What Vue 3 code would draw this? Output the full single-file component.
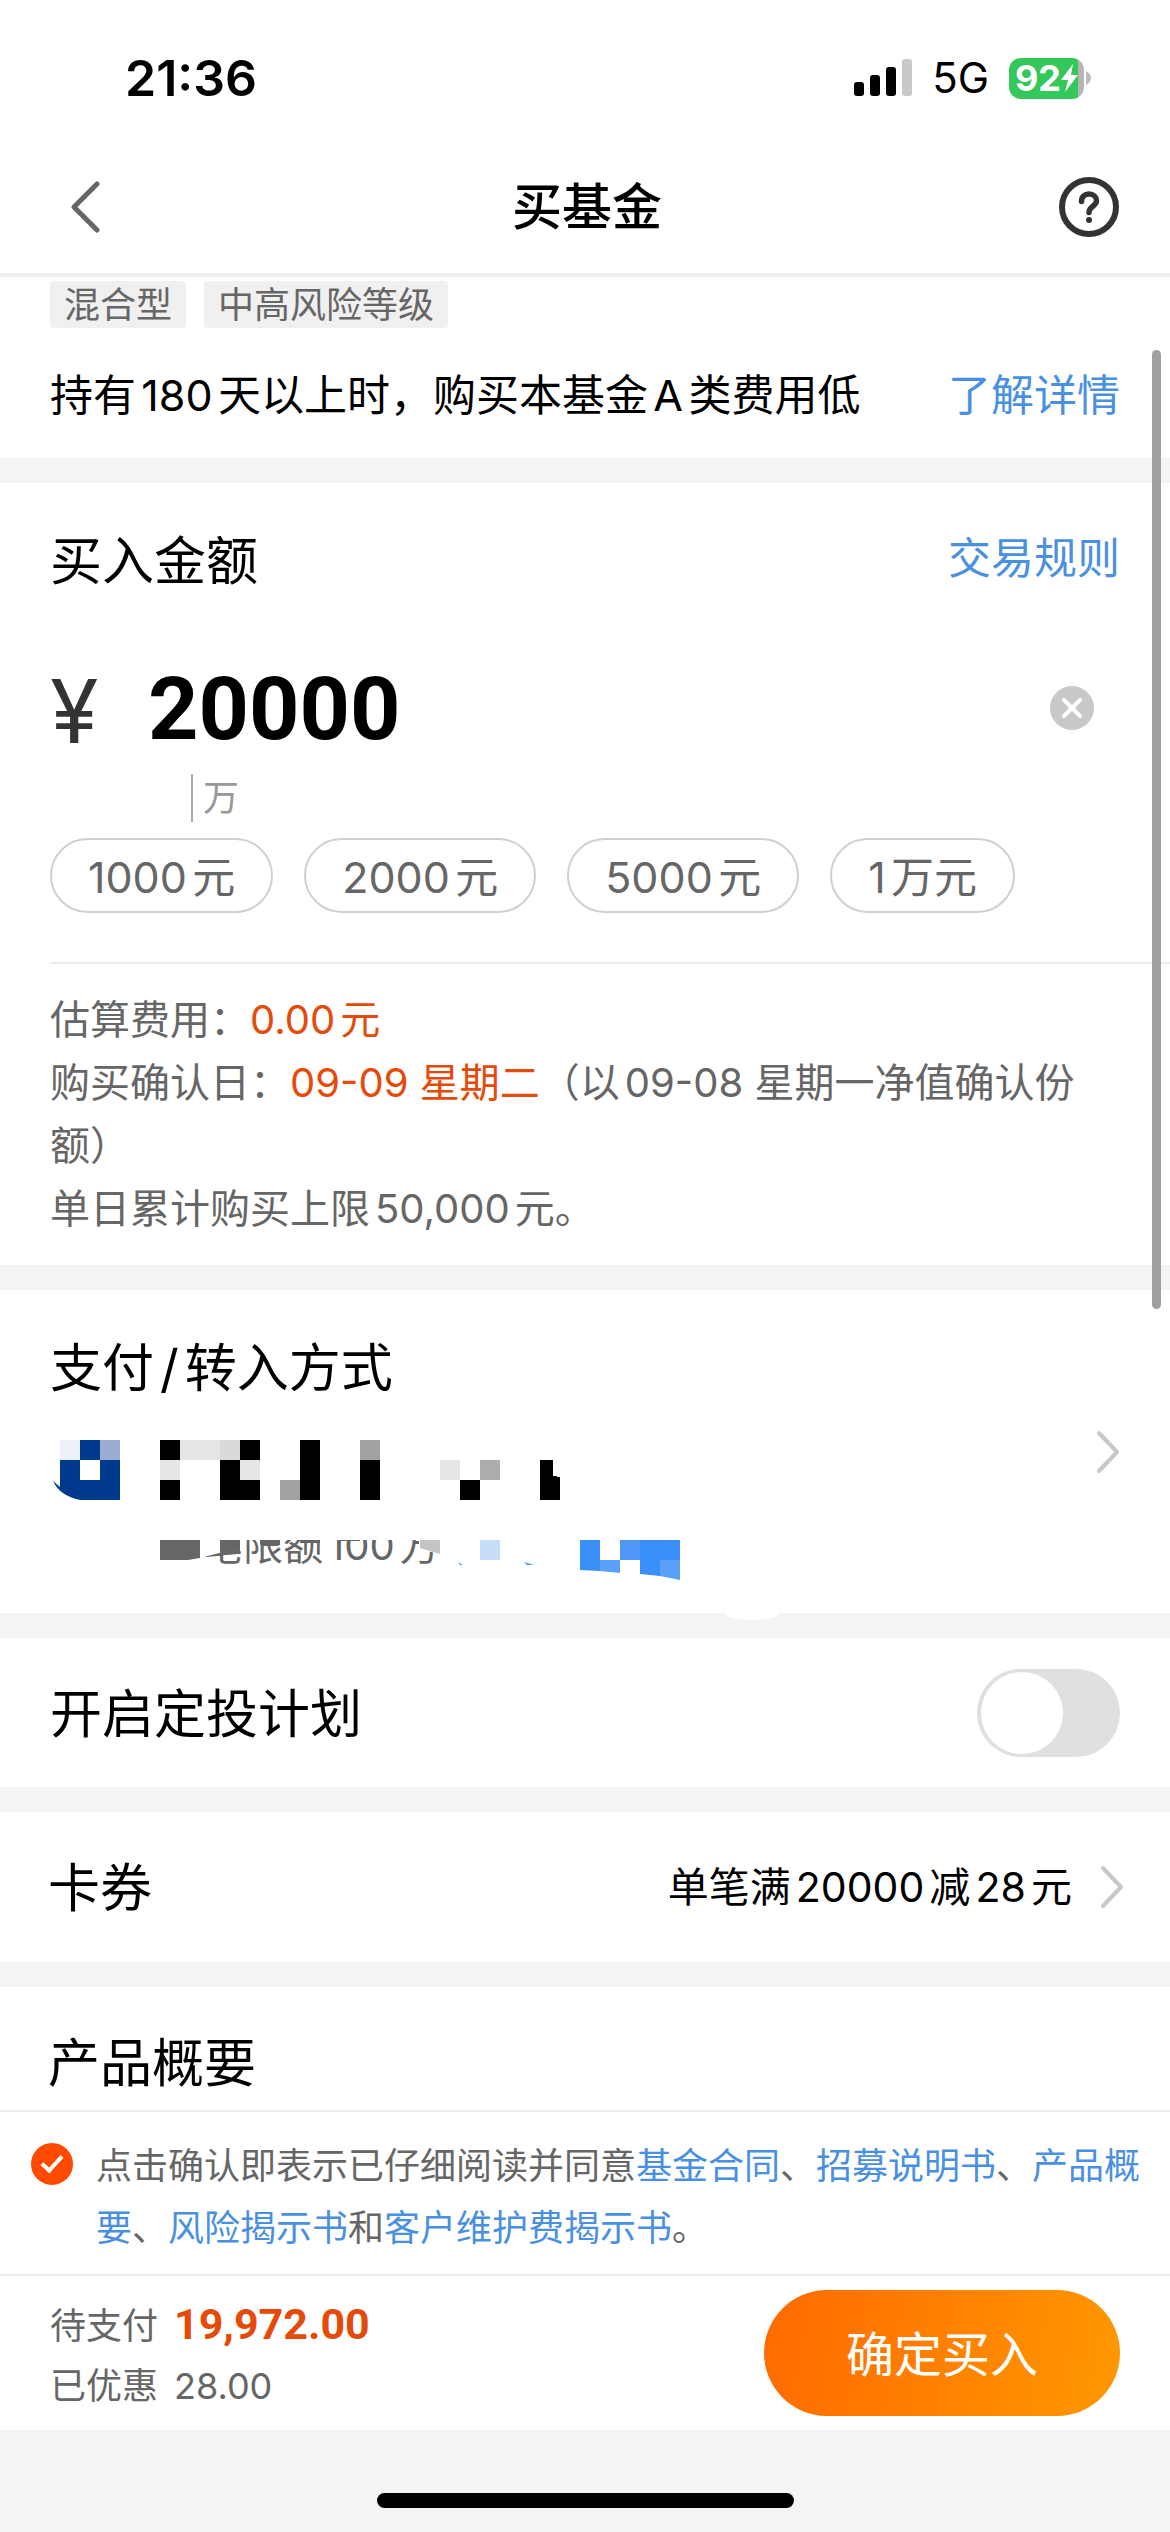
<script setup>
import { ref } from 'vue'

const amount = ref('20000')
const plan = ref(false)
const agreed = ref(true)
const presets = ['1000元', '2000元', '5000元', '1万元']
</script>

<template>
  <div class="page">
    <header class="status">
      <span class="clock">21:36</span>
      <div class="status-right">
        <svg class="signal" width="58" height="38" viewBox="0 0 58 38" aria-hidden="true">
          <rect x="0" y="23" width="10" height="14" rx="3" fill="#000" />
          <rect x="16" y="16" width="10" height="21" rx="3" fill="#000" />
          <rect x="32" y="8" width="10" height="29" rx="3" fill="#000" />
          <rect x="48" y="0" width="10" height="37" rx="3" fill="#c9c9c9" />
        </svg>
        <span class="network">5G</span>
        <span class="battery">
          <span class="battery-body">
            <span class="level">92</span>
            <svg width="17" height="28" viewBox="0 0 17 28" aria-hidden="true">
              <path d="M12 0 L0 16 H7 L4 28 L17 11 H10 Z" fill="#fff" />
            </svg>
          </span>
          <svg width="5" height="14" viewBox="0 0 5 14" aria-hidden="true">
            <path d="M0 0 Q5 3 5 7 Q5 11 0 14 Z" fill="#bdbdbd" />
          </svg>
        </span>
      </div>
    </header>

    <nav class="nav">
      <button class="icon-button back" type="button" aria-label="返回">
        <svg width="30" height="54" viewBox="0 0 30 54">
          <path d="M27 4 L4 27 L27 50" fill="none" stroke="#666" stroke-width="5" stroke-linecap="round" stroke-linejoin="round" />
        </svg>
      </button>
      <h1>买基金</h1>
      <button class="icon-button" type="button" aria-label="帮助">
        <svg width="60" height="60" viewBox="0 0 60 60">
          <circle cx="30" cy="30" r="27" fill="none" stroke="#333" stroke-width="6" />
          <path d="M22.500 24.500 C22.500 19.500 25.500 17 30 17 C34.500 17 37.500 20 37.500 23.500 C37.500 29.500 30 29 30 35.500" fill="none" stroke="#333" stroke-width="5.500" stroke-linecap="round" />
          <circle cx="30" cy="43" r="3" fill="#333" />
        </svg>
      </button>
    </nav>

    <main>
      <section class="intro">
        <div class="tags">
          <span>混合型</span>
          <span>中高风险等级</span>
        </div>
        <div class="row fee-tip">
          <p>持有180天以上时，购买本基金A类费用低</p>
          <a href="#detail">了解详情</a>
        </div>
      </section>

      <section class="buy">
        <div class="row">
          <h2><label for="amount">买入金额</label></h2>
          <a href="#rules">交易规则</a>
        </div>
        <div class="amount">
          <span class="currency">¥</span>
          <input id="amount" v-model="amount" type="text" inputmode="decimal" />
          <button class="icon-button" type="button" aria-label="清除" @click="amount = ''">
            <svg width="44" height="44" viewBox="0 0 44 44">
              <circle cx="22" cy="22" r="22" fill="#c8c8c8" />
              <path d="M14 14 L30 30 M30 14 L14 30" stroke="#fff" stroke-width="4" stroke-linecap="round" />
            </svg>
          </button>
        </div>
        <div class="unit"><span>万</span></div>
        <div class="presets">
          <button v-for="p in presets" :key="p" type="button">{{ p }}</button>
        </div>
        <div class="info">
          <p>估算费用：<em>0.00元</em></p>
          <p>购买确认日：<em>09-09 星期二</em>（以09-08 星期一净值确认份额）</p>
          <p>单日累计购买上限50,000元。</p>
        </div>
      </section>

      <section class="pay">
        <h2>支付<span class="slash">/</span>转入方式</h2>
        <div class="account">
          <div class="account-text">
            <svg class="masked-name" width="510" height="60" viewBox="0 0 510 60" shape-rendering="crispEdges" aria-hidden="true">
              <path d="M30 0 H50 V20 H70 V60 H30 Q10 56 3 41 L10 47 V20 H30 Z" fill="#003a8c" shape-rendering="auto" />
              <rect x="10" y="0" width="20" height="20" fill="#edf1fa" />
              <rect x="50" y="0" width="20" height="20" fill="#98add1" />
              <rect x="30" y="20" width="20" height="20" fill="#fff" />
              <path d="M110 0h20v20h-20z M190 0h20v20h-20z M170 20h20v20h20v20h-40z M110 40h20v20h-20z M250 0h20v60h-20z M310 20h20v40h-20z M410 40h20v20h-20z M490 20h13v16l7 1v23h-20z" fill="#000" />
              <path d="M130 0h40v20h-40z M110 20h20v20h-20z M190 20h20v20h-20z M390 20h20v20h-20z" fill="#e5e5e7" />
              <rect x="170" y="0" width="20" height="20" fill="#dadadb" />
              <path d="M230 40h20v20h-20z M310 0h20v20h-20z" fill="#a1a1a1" />
              <rect x="430" y="20" width="20" height="20" fill="#adadad" />
            </svg>
            <div class="limit">
              <span>单笔限额100万</span>
              <svg class="mask" width="520" height="40" viewBox="0 0 520 40" aria-hidden="true">
                <path d="M0 0h86v6L40 18L54 21V28H0z" fill="#fff" />
                <path d="M0 0h40v18L28 20H0z M60 0h20v11L60 15z M100 0h20v5h-20z M140 0h20v3h-20z M180 0h20v1h-20z" fill="#666" />
                <path d="M259 0h25v15l-25-6z" fill="#fff" />
                <path d="M260 0h20v14l-20-6z" fill="#c4c4c4" />
                <rect x="320" y="0" width="20" height="20" fill="#c6def9" />
                <path d="M298 22l5 3h-3z M364 22l10 3h-7z" fill="#5a9bd0" />
                <path d="M420 0h20v31l-20-1z M480 0h40v20h-20v16l-20-2z" fill="#3a8ff8" />
                <path d="M440 20h20v13l-20-2z M500 20h20v20l-20-4z" fill="#5a9ff8" />
                <rect x="460" y="0" width="20" height="20" fill="#5096f6" />
              </svg>
            </div>
          </div>
          <svg class="chevron" width="24" height="44" viewBox="0 0 24 44" aria-hidden="true">
            <path d="M3 3 L21 22 L3 41" />
          </svg>
        </div>
      </section>

      <section class="row plan">
        <h2><label for="plan">开启定投计划</label></h2>
        <input id="plan" v-model="plan" class="switch" type="checkbox" />
      </section>

      <section class="row coupon">
        <h2>卡券</h2>
        <div class="coupon-value">
          <span>单笔满20000减28元</span>
          <svg class="chevron" width="24" height="44" viewBox="0 0 24 44" aria-hidden="true">
            <path d="M3 3 L21 22 L3 41" />
          </svg>
        </div>
      </section>

      <section class="summary">
        <h2>产品概要</h2>
      </section>
    </main>

    <div class="agreement">
      <input id="agree" v-model="agreed" type="checkbox" />
      <p>
        <label for="agree">点击确认即表示已仔细阅读并同意</label><a href="#contract">基金合同</a>、<a href="#prospectus">招募说明书</a>、<a href="#summary">产品概要</a>、<a href="#risk">风险揭示书</a>和<a href="#service">客户维护费揭示书</a>。
      </p>
    </div>

    <footer class="checkout">
      <div class="totals">
        <p><span>待支付</span><strong>19,972.00</strong></p>
        <p><span>已优惠</span><span>28.00</span></p>
      </div>
      <button class="submit" type="button">确定买入</button>
    </footer>

    <div class="home"><span></span></div>
    <div class="scrollbar"></div>
  </div>
</template>

<style>
body {
  margin: 0;
  background: #f4f4f4;
}
</style>

<style scoped>
.page {
  position: relative;
  display: flex;
  flex-direction: column;
  min-height: 100vh;
  background: #f4f4f4;
  color: #000;
  font-family: Inter, "Noto Sans CJK SC", sans-serif;
  font-size: 43px;
  line-height: 60px;
  text-autospace: normal;
}

h1,
h2,
p {
  margin: 0;
  font-weight: 400;
}

h2 {
  padding-top: 4px;
  font-size: 52px;
}

a {
  color: #4a90e2;
  text-decoration: none;
}

button,
input {
  margin: 0;
  padding: 0;
  border: 0;
  background: none;
  color: inherit;
  font-family: inherit;
}

svg {
  display: block;
  flex: none;
}

section,
.status,
.nav,
.agreement,
.checkout {
  background: #fff;
}

main {
  display: flex;
  flex-direction: column;
  gap: 25px;
}

.row {
  display: flex;
  align-items: center;
  justify-content: space-between;
}

.status {
  display: flex;
  align-items: center;
  justify-content: space-between;
  height: 50px;
  padding: 53px 79px 35px 125px;
}

.clock {
  font-size: 50px;
  font-weight: 600;
}

.status-right {
  display: flex;
  align-items: center;
}

.network {
  margin: 0 20px;
  font-size: 42px;
}

.battery {
  display: flex;
  align-items: center;
  gap: 2px;
}

.battery-body {
  display: flex;
  align-items: center;
  justify-content: center;
  width: 75px;
  height: 41px;
  border-radius: 12px;
  background: linear-gradient(90deg, #34c759 69px, #b5b5b5 69px);
}

.level {
  color: #fff;
  font-size: 36px;
  font-weight: 700;
}

.nav {
  display: flex;
  align-items: center;
  justify-content: space-between;
  padding: 39px 51px 36px 55px;
  border-bottom: 4px solid #efefef;
}

.nav h1 {
  font-size: 50px;
  font-weight: 500;
}

.icon-button {
  display: flex;
  align-items: center;
  justify-content: center;
}

.back {
  width: 60px;
}

.intro {
  padding: 4px 50px 33px;
}

.tags {
  display: flex;
  gap: 18px;
}

.tags span {
  padding: 1px 14px 0;
  border-radius: 4px;
  background: #f0f0f0;
  color: #666;
  font-size: 36px;
  line-height: 46px;
}

.fee-tip {
  margin-top: 37px;
}

.buy {
  padding: 45px 0 25px 50px;
}

.buy .row {
  align-items: flex-start;
  padding-right: 50px;
}

.amount {
  display: flex;
  align-items: center;
  height: 100px;
  margin-top: 66px;
  padding-right: 76px;
}

.currency {
  width: 98px;
  padding-top: 6px;
  color: #333;
  font-size: 88px;
}

.amount input {
  flex: 1;
  min-width: 0;
  height: 100px;
  font-family: Roboto, sans-serif;
  font-size: 88px;
  font-weight: 700;
}

.unit {
  display: flex;
  margin: 16px 0 16px 141px;
}

.unit span {
  padding-left: 10px;
  border-left: 2px solid #aaa;
  color: #999;
  font-size: 36px;
  line-height: 48px;
}

.presets {
  display: flex;
  gap: 31px;
}

.presets button {
  height: 75px;
  padding: 0 36px 3px;
  border: 2px solid #d0d0d0;
  border-radius: 38px;
  color: #666;
  font-size: 43px;
}

.info {
  margin-top: 49px;
  padding: 24px 50px 0 0;
  border-top: 2px solid #ececec;
  color: #666;
  font-size: 40px;
  line-height: 63px;
}

.info em {
  color: #e64a0a;
  font-style: normal;
}

.pay {
  position: relative;
  padding: 45px 50px 33px;
}

/* soft highlight that spills over the lower edge of the card */
.pay::after {
  position: absolute;
  bottom: -7px;
  left: 62%;
  width: 54px;
  height: 14px;
  border-radius: 50%;
  background: #fff;
  content: "";
}

.slash {
  margin: 0 6px;
}

.account {
  display: flex;
  align-items: flex-start;
  justify-content: space-between;
  margin-top: 41px;
}

.account .chevron {
  margin-top: -10px;
}

.chevron path {
  fill: none;
  stroke: #c8c8c8;
  stroke-width: 4;
  stroke-linecap: round;
  stroke-linejoin: round;
}

.limit {
  position: relative;
  width: 520px;
  height: 40px;
  margin: 40px 0 0 110px;
}

.limit span {
  display: flex;
  align-items: flex-end;
  height: 28px;
  padding-left: 3px;
  overflow: hidden;
  color: #666;
  font-size: 40px;
  line-height: 44px;
}

.mask {
  position: absolute;
  top: 0;
  left: 0;
}

.plan {
  padding: 31px 50px 30px;
}

.switch {
  display: flex;
  align-items: center;
  width: 143px;
  height: 88px;
  padding: 0 4px;
  box-sizing: border-box;
  border-radius: 44px;
  background: #e0e0e0;
  appearance: none;
}

.switch::after {
  width: 82px;
  height: 82px;
  border-radius: 50%;
  background: #fff;
  content: "";
}

.switch:checked {
  justify-content: flex-end;
  background: #ff6a00;
}

.coupon {
  padding: 43px 46px 43px 48px;
}

.coupon-value {
  display: flex;
  align-items: center;
  gap: 28px;
  font-size: 41px;
}

.summary {
  padding: 43px 48px 16px;
}

.agreement {
  display: flex;
  align-items: flex-start;
  gap: 23px;
  padding: 23px 26px 15px 31px;
  border-top: 2px solid #ececec;
  border-bottom: 2px solid #ececec;
  color: #666;
  font-size: 36px;
  line-height: 62px;
}

.agreement input {
  display: flex;
  flex: none;
  justify-content: center;
  width: 42px;
  height: 42px;
  margin-top: 8px;
  border: 2px solid #ccc;
  box-sizing: border-box;
  border-radius: 50%;
  appearance: none;
}

.agreement input:checked {
  border-color: #ff4a00;
  background: #ff4a00;
}

.agreement input:checked::after {
  width: 8px;
  height: 17px;
  margin-top: 6px;
  border: solid #fff;
  border-width: 0 4px 4px 0;
  transform: rotate(42deg);
  content: "";
}

.checkout {
  display: flex;
  align-items: center;
  justify-content: space-between;
  padding: 14px 50px;
}

.totals {
  padding-top: 4px;
  color: #666;
  font-size: 36px;
}

.totals p {
  display: flex;
  align-items: baseline;
  gap: 16px;
}

.totals strong {
  color: #e64a0a;
  font-family: Roboto, sans-serif;
  font-size: 43px;
}

.submit {
  width: 356px;
  height: 126px;
  padding-bottom: 5px;
  border-radius: 63px;
  background: linear-gradient(100deg, #ff6a00, #ff9800);
  color: #fff;
  font-size: 48px;
}

.home {
  display: flex;
  justify-content: center;
  padding: 63px 0 24px;
}

.home span {
  width: 417px;
  height: 15px;
  border-radius: 8px;
  background: #000;
}

.scrollbar {
  position: absolute;
  top: 350px;
  right: 9px;
  width: 9px;
  height: 959px;
  border-radius: 5px;
  background: #a0a0a0;
}
</style>
